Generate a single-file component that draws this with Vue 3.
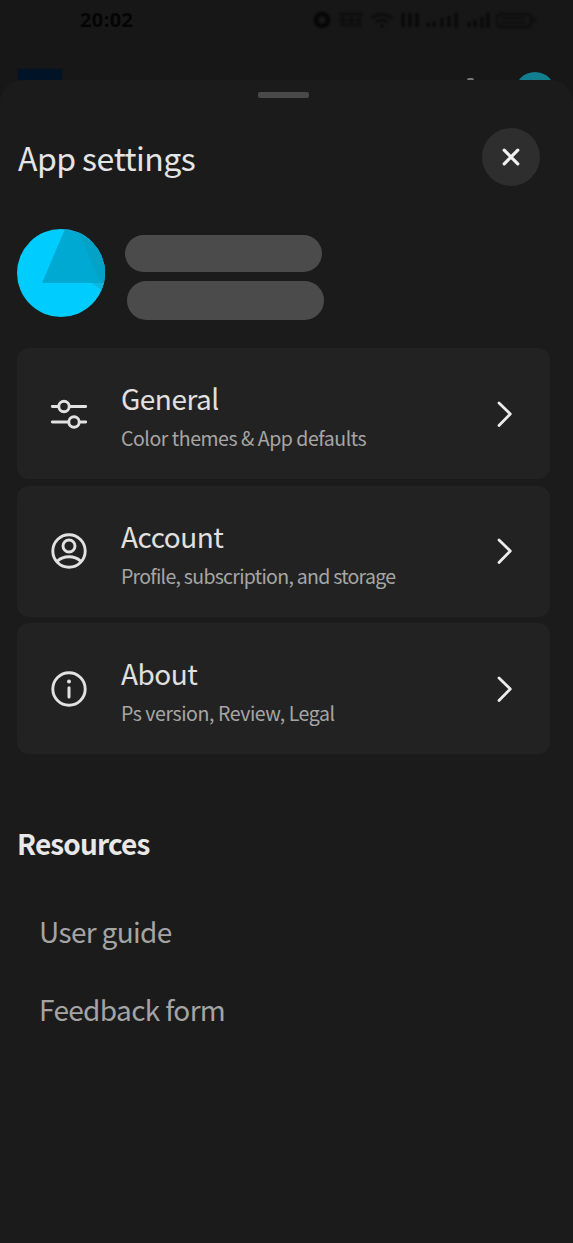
<script setup>
const items = [
  { icon: 'sliders', title: 'General', sub: 'Color themes & App defaults' },
  { icon: 'user', title: 'Account', sub: 'Profile, subscription, and storage' },
  { icon: 'info', title: 'About', sub: 'Ps version, Review, Legal' },
]
const links = ['User guide', 'Feedback form']
</script>

<template>
  <div class="screen">
    <div class="backdrop">
      <div class="status">
        <span class="time">20:02</span>
        <svg class="indicators" width="226" height="22" viewBox="0 0 226 22">
          <circle cx="10" cy="11" r="6" fill="none" stroke="#060606" stroke-width="4.5" />
          <path d="M27 5h24M27 11h22M28 16h22M31 4v13M39 4v13M47 4v13" fill="none" stroke="#0e0e0e" stroke-width="2.4" />
          <path d="M60 9q10-7 20 0M64 13q6-4 12 0" fill="none" stroke="#0d0d0d" stroke-width="3" />
          <circle cx="70" cy="17" r="2" fill="#0d0d0d" />
          <path d="M91 4v14M98 4v14M105 4v14" stroke="#0b0b0b" stroke-width="4" />
          <path d="M116 14v4M122 12v6M130 9v9M137 7v11M144 4v15" stroke="#0a0a0a" stroke-width="3.4" />
          <path d="M157 13v5M163 11v7M170 8v11M176 4v15" stroke="#0a0a0a" stroke-width="3.4" />
          <rect x="185" y="5" width="34" height="13" rx="4" fill="none" stroke="#0e0e0e" stroke-width="2.5" />
          <path d="M189 9h24M189 14h24M222 8v6" stroke="#0f0f0f" stroke-width="2.5" />
        </svg>
      </div>
      <div class="appbar">
        <span class="app-tile"></span>
        <span class="bell"></span>
        <span class="mini-avatar"></span>
      </div>
    </div>

    <div class="sheet">
      <div class="handle"></div>
      <header class="header">
        <h1>App se<span class="joined">t</span>tings</h1>
        <button class="close" aria-label="Close">
          <svg width="20" height="20" viewBox="0 0 20 20">
            <path d="M3.2 3.2l13.6 13.6M16.8 3.2L3.2 16.8" stroke="#f0f0f0" stroke-width="3.2" stroke-linecap="round" />
          </svg>
        </button>
      </header>

      <section class="profile">
        <svg class="avatar" width="88" height="88" viewBox="0 0 88 88">
          <defs><clipPath id="disc"><circle cx="44" cy="44" r="44" /></clipPath></defs>
          <g clip-path="url(#disc)">
            <rect width="88" height="88" fill="#00cdfd" />
            <path d="M48 0L25 54H78L88 64V0z" fill="#00a9d2" />
            <path d="M60 0L88 64V0z" fill="#05a2c8" />
            <path d="M75 54L88 64V54z" fill="#12b4dc" />
          </g>
        </svg>
        <div class="pills">
          <span class="pill"></span>
          <span class="pill second"></span>
        </div>
      </section>

      <nav class="cards">
        <div v-for="item in items" :key="item.title" class="card">
          <svg class="icon" width="38" height="38" viewBox="0 0 38 38" fill="none" stroke="#e2e2e2" stroke-width="2.9" stroke-linecap="round">
            <g v-if="item.icon === 'sliders'">
              <path d="M2.3 11.5H8.6M19.4 11.5H35.7M2.3 27H18.5M30 27H35.7" />
              <circle cx="14" cy="11.5" r="5.2" />
              <circle cx="24" cy="27" r="5.2" />
            </g>
            <g v-else-if="item.icon === 'user'">
              <circle cx="19" cy="19" r="16.2" />
              <circle cx="19" cy="14" r="6" />
              <path d="M7.5 29Q12 24.8 19 24.8T30.5 29" />
            </g>
            <g v-else>
              <circle cx="19" cy="19" r="16.2" />
              <path d="M19 17.8V27" stroke-width="3" />
              <circle cx="19" cy="11.5" r="2" fill="#e2e2e2" stroke="none" />
            </g>
          </svg>
          <div class="copy">
            <div class="title">{{ item.title }}</div>
            <div class="sub" :class="item.icon">{{ item.sub }}</div>
          </div>
          <svg class="chevron" width="18" height="30" viewBox="0 0 18 30" fill="none" stroke="#ececec" stroke-width="2.8" stroke-linecap="round" stroke-linejoin="round">
            <path d="M3 4L14.3 15L3 26.5" />
          </svg>
        </div>
      </nav>

      <section class="resources">
        <h2>Resources</h2>
        <a v-for="link in links" :key="link" class="link">{{ link }}</a>
      </section>
    </div>
  </div>
</template>

<style>
body {
  margin: 0;
  background: #1b1b1b;
}
</style>

<style scoped>
.screen {
  width: 573px;
  height: 1243px;
  overflow: hidden;
  background: #171717;
  font-family: "Noto Sans CJK SC", "Open Sans", sans-serif;
  white-space: nowrap;
}
.backdrop {
  height: 80px;
}
.status {
  display: flex;
  height: 40px;
  justify-content: space-between;
  align-items: center;
  box-sizing: border-box;
  padding: 0 35px 0 80px;
}
.time {
  font: 700 20px/22px "Open Sans", sans-serif;
  letter-spacing: 0.4px;
  color: #050505;
  filter: blur(0.5px);
}
.indicators {
  filter: blur(0.9px);
}
.appbar {
  display: flex;
  height: 40px;
  padding: 0 18px;
  align-items: flex-start;
}
.app-tile {
  width: 48px;
  height: 30px;
  margin-top: 29px;
  background: #001327;
  filter: blur(1px);
}
.bell {
  width: 8px;
  height: 2px;
  margin: 38px 0 0 405px;
  border-radius: 2px 2px 0 0;
  background: #777;
}
.mini-avatar {
  width: 40px;
  height: 40px;
  flex: none;
  margin: 32px 0 0 41px;
  border-radius: 50%;
  background: #127f8e;
}
.sheet {
  height: 1163px;
  position: relative;
  box-sizing: border-box;
  padding: 12px 17px 0;
  background: #1b1b1b;
  border-radius: 22px 22px 0 0;
}
.handle {
  width: 51px;
  height: 6px;
  margin-left: 241px;
  border-radius: 2px;
  background: #494949;
}
.header {
  display: flex;
  height: 58px;
  margin-top: 30px;
  padding-right: 16px;
  justify-content: space-between;
  align-items: center;
}
h1 {
  margin: 0 0 1px 1px;
  font-size: 32px;
  font-weight: 400;
  line-height: 40px;
  letter-spacing: -0.55px;
  color: #e4e4e4;
}
.joined {
  letter-spacing: -1.2px;
}
.close {
  display: grid;
  width: 58px;
  height: 58px;
  padding: 0;
  place-items: center;
  border: 0;
  border-radius: 50%;
  background: #2e2e2e;
}
.profile {
  display: flex;
  height: 91px;
  margin-top: 43px;
}
.avatar {
  flex: none;
}
.pills {
  display: flex;
  flex-direction: column;
  gap: 9px;
  padding: 6px 0 0 20px;
}
.pill {
  width: 197px;
  height: 37px;
  border-radius: 20px;
  background: #4b4b4b;
}
.second {
  height: 39px;
  margin-left: 2px;
}
.cards {
  display: flex;
  width: 533px;
  flex-direction: column;
  gap: 6.5px;
  margin-top: 28px;
}
.card {
  display: flex;
  height: 131px;
  box-sizing: border-box;
  padding: 0 36px 0 33px;
  align-items: center;
  border-radius: 12px;
  background: #222;
}
.icon {
  flex: none;
}
.copy {
  flex: 1;
  margin: 8px 0 0 33px;
}
.title {
  font-size: 28px;
  line-height: 40px;
  letter-spacing: -0.5px;
  color: #e0e0e0;
}
.sub {
  font-size: 19.5px;
  line-height: 39px;
  letter-spacing: -0.45px;
  color: #a6a6a6;
}
.sub.user {
  letter-spacing: -0.72px;
}
.sub.info {
  letter-spacing: -0.42px;
}
.chevron {
  flex: none;
}
.resources {
  display: flex;
  flex-direction: column;
  margin-top: 69px;
}
h2 {
  margin: 0;
  font-size: 28px;
  font-weight: 700;
  line-height: 40px;
  letter-spacing: -0.85px;
  color: #e8e8e8;
}
.link {
  margin: 48px 0 0 22px;
  font-size: 28px;
  line-height: 40px;
  letter-spacing: -0.65px;
  color: #a4a4a4;
}
.link + .link {
  margin-top: 38px;
}
</style>
